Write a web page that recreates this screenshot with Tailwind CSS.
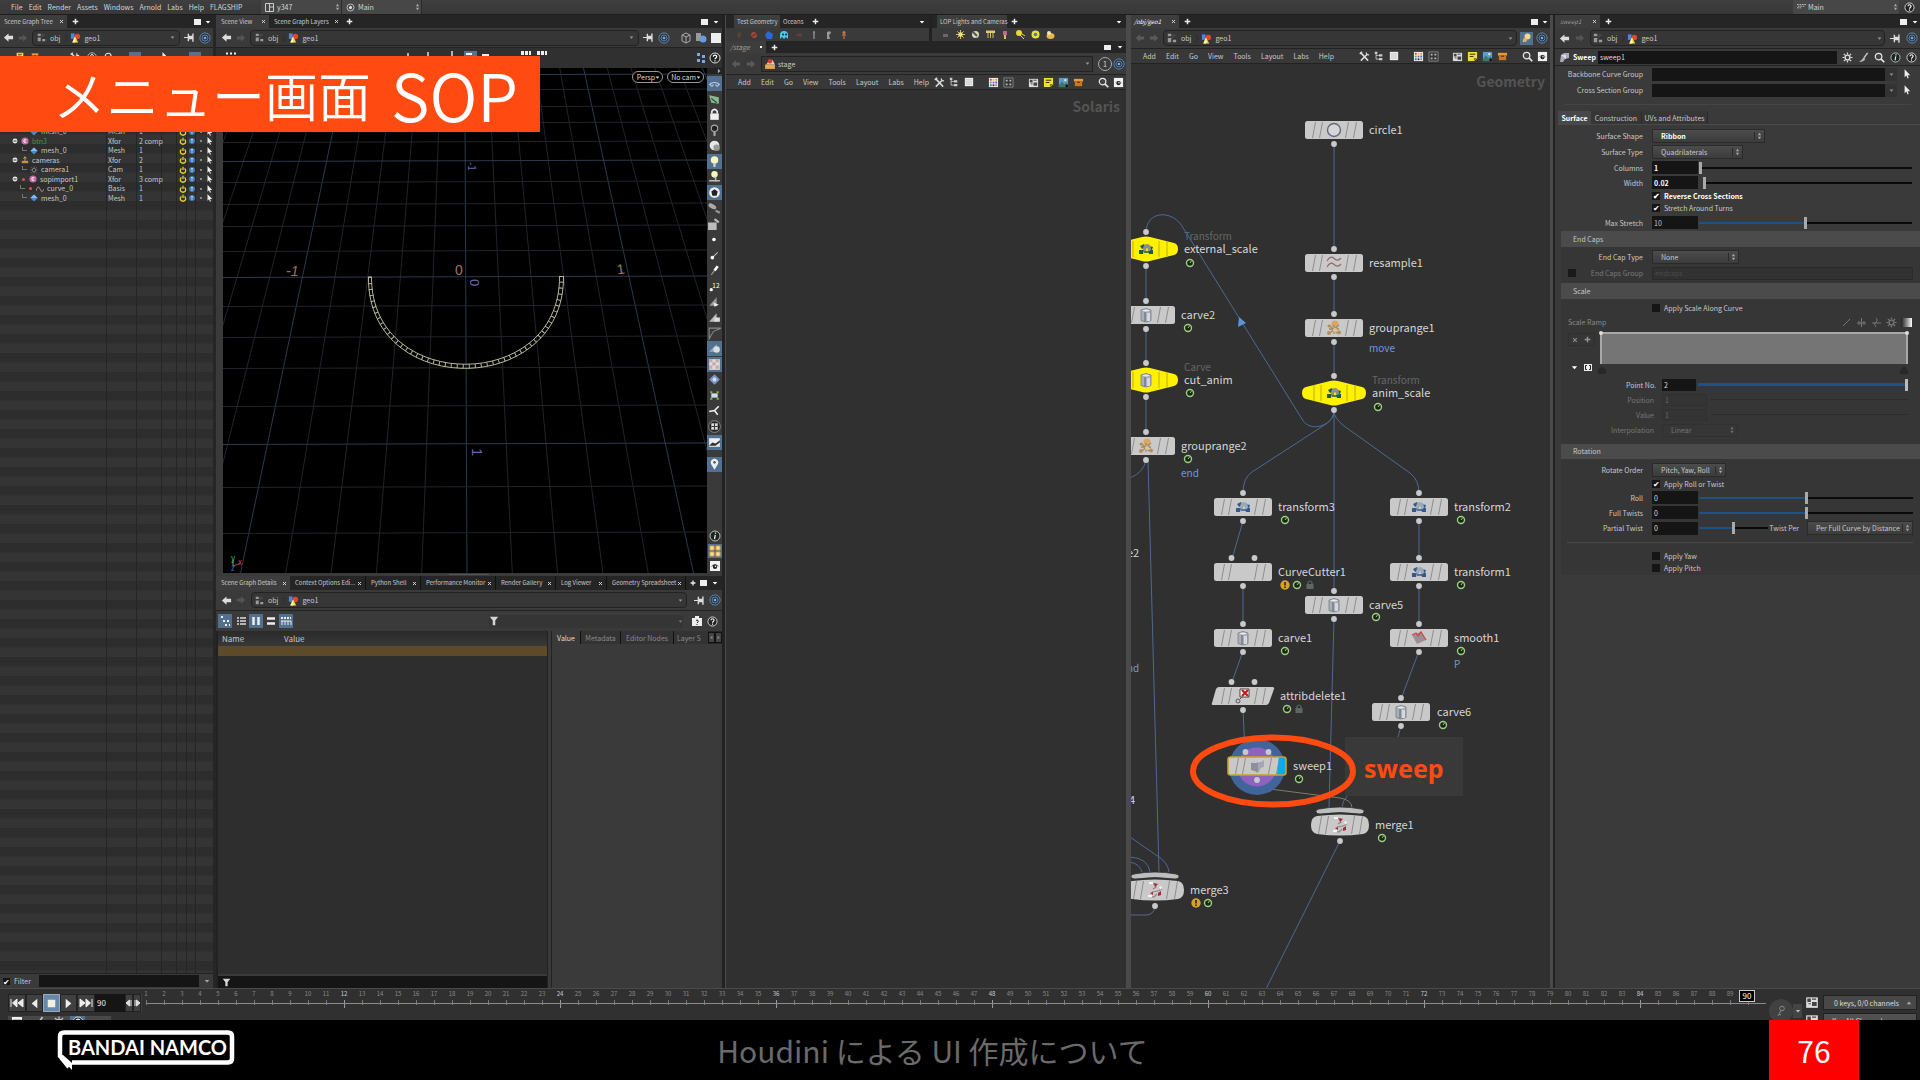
<!DOCTYPE html>
<html lang="ja">
<head>
<meta charset="utf-8">
<title>メニュー画面 SOP</title>
<script src="https://cdn.jsdelivr.net/npm/@tailwindcss/browser@4"></script>
</head>
<body class="min-h-screen flex flex-col bg-black text-[#c8c8c8] font-['Noto_Sans_CJK_JP','Noto_Sans',sans-serif] text-[7px] leading-[10px] whitespace-nowrap overflow-hidden">

<svg class="hidden">
  <symbol id="back" viewBox="0 0 12 12"><path d="M1 6 6 1.500v2.700h5v3.600H6v2.700z" fill="currentColor"/></symbol>
  <symbol id="fwd" viewBox="0 0 12 12"><path d="M11 6 6 1.500v2.700H1v3.600h5v2.700z" fill="currentColor"/></symbol>
  <symbol id="obj" viewBox="0 0 12 12"><path d="M1 1h4v3H1zM1 6h4v5H1zM7 8h4v3H7z" fill="#9a9a9a"/><path d="M5 2.500h5M5 7l4-4" stroke="#777" stroke-dasharray="1 1" fill="none"/></symbol>
  <symbol id="geo" viewBox="0 0 12 12"><path d="M1 1.500h4v6H1z" fill="#4d86d8"/><circle cx="8" cy="5" r="3" fill="#e0482c"/><path d="M5.500 5 9 11.500H2.500z" fill="#f4d93c"/><path d="M5.500 5 6 11.500H2.500z" fill="#fff3b0"/></symbol>
  <symbol id="pin" viewBox="0 0 12 12"><path d="M0 5.500h4v1H0zM4 2h1.500v2H9V1.500h1.500v9H9V8H5.500v2H4z" fill="#ddd"/></symbol>
  <symbol id="target" viewBox="0 0 14 14"><circle cx="7" cy="7" r="6" fill="#23384f" stroke="#6f8aa6"/><circle cx="7" cy="7" r="3.500" fill="none" stroke="#6a88a8"/><circle cx="7" cy="7" r="1.500" fill="#88a8c8"/></symbol>
  <symbol id="help" viewBox="0 0 12 12"><circle cx="6" cy="6" r="5" fill="#222" stroke="#ddd"/><path d="M4.300 4.700c0-2.200 3.400-2.200 3.400 0 0 1.300-1.700 1.200-1.700 2.600M6 8.300v1.200" stroke="#fff" stroke-width="1.200" fill="none"/></symbol>
  <symbol id="info" viewBox="0 0 12 12"><circle cx="6" cy="6" r="5" fill="#1c2420" stroke="#b9c4bd"/><path d="M6.500 2.500v1.200M6.300 4.800 5.500 9.200" stroke="#e8eee9" stroke-width="1.300"/></symbol>
  <symbol id="mag" viewBox="0 0 12 12"><circle cx="5" cy="5" r="3.600" fill="#444" stroke="#e8e8e8" stroke-width="1.300"/><path d="m7.800 7.800 3.400 3.400" stroke="#e8e8e8" stroke-width="1.800"/></symbol>
  <symbol id="eye" viewBox="0 0 12 12"><path d="M1 1h10v10H1z" fill="#f2f2f2"/><path d="M1.500 7Q6 1.500 10.500 7 6 3.500 1.500 7z" fill="#222"/><circle cx="6" cy="6.800" r="2.200" fill="#222"/><circle cx="6.500" cy="6.300" r=".8" fill="#fff"/></symbol>
  <symbol id="gear" viewBox="0 0 12 12"><circle cx="6" cy="6" r="2.600" fill="none" stroke="currentColor" stroke-width="1.500"/><path d="M6 .5v2.300M6 9.200v2.300M.5 6h2.300M9.200 6h2.300M2 2l1.700 1.700M8.300 8.300 10 10M10 2 8.300 3.700M3.700 8.300 2 10" stroke="currentColor" stroke-width="1.300"/></symbol>
  <symbol id="brush" viewBox="0 0 12 12"><path d="M10.500 1 6.500 6.500" stroke="#ccc" stroke-width="1.500"/><path d="M6 6 8 7.500Q6 11 1 10.500 4.500 9 6 6z" fill="#bbb"/></symbol>
  <symbol id="tools" viewBox="0 0 12 12"><path d="m2 10.500 7-7M1.500 1.500l8.500 9" stroke="#ddd" stroke-width="1.600"/><path d="M8 1.500Q8 4.500 11 4.200M.8 3.300 3.500.8" stroke="#ddd" stroke-width="1.400" fill="none"/></symbol>
  <symbol id="tree" viewBox="0 0 12 12"><path d="M1 1h3v2.500H1zM6 4h4v2.500H6zM6 8.500h4V11H6z" fill="#ccc"/><path d="M2.500 3.500v6.300H6M2.500 5.300H6" stroke="#ccc" fill="none"/></symbol>
  <symbol id="list" viewBox="0 0 12 12"><path d="M1 1h10v10H1z" fill="#eee"/><path d="M2 3.500h8M2 6h8M2 8.500h8" stroke="#bbb"/></symbol>
  <symbol id="pal" viewBox="0 0 12 12"><path d="M1 1h10v10H1z" fill="#f4f4f4"/><path d="M2 2h2v2H2z" fill="#d33"/><path d="M5 2h2v2H5z" fill="#e8c030"/><path d="M8 2h2v2H8z" fill="#e89030"/><path d="M2 5h2v2H2z" fill="#38b048"/><path d="M5 5h2v2H5z" fill="#b040c0"/><path d="M8 5h2v2H8zM2 8h2v2H2z" fill="#3070d0"/><path d="M5 8h2v2H5z" fill="#333"/><path d="M8 8h2v2H8z" fill="#888"/></symbol>
  <symbol id="dots" viewBox="0 0 12 12"><path d="M1 1h10v10H1z" fill="#333" stroke="#888"/><path d="M3 3h2v2H3zM7 3h2v2H7zM3 7h2v2H3zM7 7h2v2H7z" fill="#bbb"/></symbol>
  <symbol id="nodes" viewBox="0 0 12 12"><path d="M1 2h10v9H1z" fill="#ddd"/><path d="M2 3h3v3H2zM6 6h4v3.500H6z" fill="#444"/><path d="M6 3.500h3.500M3 7.500h2" stroke="#444"/></symbol>
  <symbol id="note" viewBox="0 0 12 12"><path d="M1 1h10v7l-3 3H1z" fill="#f2e02c"/><path d="M3 3.500h6M3 6h4" stroke="#222"/><path d="M11 7.500 7.500 11V7.500z" fill="#8a7c10"/></symbol>
  <symbol id="img" viewBox="0 0 12 12"><path d="M1 1h10v10H1z" fill="#5b9bd0"/><path d="m1 9 3-4 3 3 2-2 2 2v3H1z" fill="#3b7a6a"/><circle cx="8" cy="3.500" r="1.200" fill="#f2f0b0"/><circle cx="9.500" cy="9.800" r="1.500" fill="#111"/></symbol>
  <symbol id="box" viewBox="0 0 12 12"><path d="M1 2h10v3H1z" fill="#e89a3c"/><path d="M2 5h8v5H2z" fill="#c87a22"/><path d="M4.500 5h3v1.500h-3z" fill="#6b3d08"/></symbol>
  <symbol id="group" viewBox="0 0 10 10"><path d="M1 6h8v3H1z" fill="#c89048"/><path d="M5 1v5M3 3l2-2 2 2" stroke="#d0b060" stroke-width="1.200" fill="none"/></symbol>
  <symbol id="cur" viewBox="0 0 10 12"><path d="M2 0v10l2.200-2 1.500 3.500 1.500-.7L5.700 7.500H9z" fill="#eee"/></symbol>
  <symbol id="pow" viewBox="0 0 10 10"><path d="M3 3Q1 5 2 7.500q3 3 6 0Q9 5 7 3M5 1v4" stroke="#e8d22c" stroke-width="1.600" fill="none"/></symbol>
  <symbol id="up" viewBox="0 0 10 10"><circle cx="5" cy="5" r="3.800" fill="#3d78bd"/><path d="M5 2.500v5M3.500 4 5 2.500 6.500 4" stroke="#cde" fill="none"/></symbol>
  <symbol id="updn" viewBox="0 0 6 10"><path d="M3 1 5 4H1zM3 9 1 6h4z" fill="#aaa"/></symbol>
  <symbol id="dn" viewBox="0 0 8 8"><path d="M1 2.500h6L4 6z" fill="currentColor"/></symbol>
  <symbol id="funnel" viewBox="0 0 12 12"><path d="M1 1h10L7.500 5.500V11h-3V5.500z" fill="#d4d4d4"/></symbol>
  <symbol id="mesh" viewBox="0 0 10 10"><path d="m5 .5 4.500 4.500L5 9.500.5 5z" fill="#4a8ac8"/><path d="m5 .5 4.500 4.500H.5z" fill="#85bbec"/></symbol>
  <symbol id="xf" viewBox="0 0 10 10"><circle cx="5" cy="5" r="4.500" fill="#c86aa8"/><path d="M6.500 3.500Q3.500 2.500 3.500 5t3 1.500" stroke="#fff" stroke-width="1.200" fill="none"/></symbol>
  <symbol id="minus" viewBox="0 0 8 8"><circle cx="4" cy="4" r="3.300" fill="#e8e8e8"/><path d="M2 4h4" stroke="#222" stroke-width="1.200"/></symbol>
  <symbol id="plus" viewBox="0 0 8 8"><path d="M4 .8v6.400M.8 4h6.400" stroke="#eee" stroke-width="1.700"/></symbol>
  <symbol id="x" viewBox="0 0 6 6"><path d="m1.200 1.200 3.600 3.600m0-3.600L1.200 4.800" stroke="#ddd" stroke-width="1.100"/></symbol>
</svg>

<div class="relative flex-1 flex flex-col bg-[#3a3a3a]">
  <!-- main menu -->
  <header class="h-[15px] flex items-center bg-linear-to-b from-[#3f3f3f] to-[#383838] border-b border-[#1d1d1d] text-[#d4d4d4]">
    <nav class="flex items-center gap-[6px] pl-[11px] w-[261px]">
      <a href="#">File</a><a href="#">Edit</a><a href="#">Render</a><a href="#">Assets</a><a href="#">Windows</a><a href="#">Arnold</a><a href="#">Labs</a><a href="#">Help</a><a href="#">FLAGSHIP</a>
    </nav>
    <button class="h-[14px] w-[81px] pl-1 flex items-center gap-[3px] bg-[#474747] border-r border-[#2a2a2a]">
      <svg class="size-[9px]" viewBox="0 0 9 9"><path d="M.5.5h8v8h-8zM4.500.5v8M4.500 4h4" fill="none" stroke="#ccc"/></svg>y347
      <svg class="w-[5px] h-2 ml-auto mr-px"><use href="#updn"/></svg></button>
    <button class="h-[14px] w-[80px] pl-1 flex items-center gap-[3px] bg-[#474747] border-r border-[#2a2a2a]">
      <svg class="size-[9px]" viewBox="0 0 9 9"><circle cx="4.500" cy="4.500" r="3.500" fill="none" stroke="#bbb"/><circle cx="4.500" cy="4.500" r="1.500" fill="#eee"/></svg>Main
      <svg class="w-[5px] h-2 ml-auto mr-px"><use href="#updn"/></svg></button>
    <button class="ml-auto h-[14px] w-[106px] pl-1 flex items-center gap-px bg-[#474747]">
      <svg class="w-[10px] h-2" viewBox="0 0 12 8"><path d="M0 1h12M1 3h9M0 5h5" stroke="#ccc" stroke-dasharray="2 1"/></svg>Main
      <svg class="w-[5px] h-2 ml-auto mr-px"><use href="#updn"/></svg></button>
    <svg class="size-[11px] mx-[5px]"><use href="#help"/></svg>
  </header>

  <main class="flex-1 grid grid-cols-[216fr_509fr_404fr_424fr_367fr] min-h-0">

    <!-- scene graph tree -->
    <section class="min-w-0 flex flex-col border-r-3 border-[#262626]">
      <div class="h-[13px] flex items-center bg-[#252525] text-[6px]">
        <div class="h-full w-[67px] pl-1 flex items-center justify-between pr-[3px] bg-[#3d3d3d]">Scene Graph Tree<svg class="size-[5px]"><use href="#x"/></svg></div>
        <svg class="size-[7px] ml-[5px]"><use href="#plus"/></svg>
        <i class="w-[7px] h-[6px] bg-[#eee] ml-auto mr-[4px]"></i><svg class="size-[6px] mr-[2px] text-white"><use href="#dn"/></svg>
      </div>
      <div class="h-5 flex items-center gap-1 pl-[3px] pr-[2px] border-b border-[#222]">
        <svg class="size-[11px] text-[#ddd]"><use href="#back"/></svg><svg class="size-[10px] text-[#555]"><use href="#fwd"/></svg>
        <div class="flex-1 h-4 flex items-center gap-1 px-1 bg-[#363636] border border-[#222] rounded-sm">
          <svg class="size-[9px]"><use href="#obj"/></svg>obj<span class="text-[#222]">〉</span><svg class="size-[11px] -ml-[6px]"><use href="#geo"/></svg>geo1<svg class="size-[5px] ml-auto text-[#999]"><use href="#dn"/></svg></div>
        <svg class="size-[11px]"><use href="#pin"/></svg><svg class="size-3"><use href="#target"/></svg>
      </div>
      <div class="h-5 flex items-start gap-[7px] pt-1 pl-4">
        <svg class="size-2"><use href="#note"/></svg><svg class="size-2"><use href="#box"/></svg>
        <svg class="size-[10px] ml-6"><use href="#tools"/></svg><svg class="size-[10px]"><use href="#help"/></svg><svg class="size-[10px]"><use href="#mag"/></svg>
        <span class="size-3 bg-[#5a7090] ml-2"></span><svg class="size-[10px] ml-3"><use href="#cur"/></svg><span class="size-3 bg-[#5a7090] ml-auto mr-3"></span>
      </div>
      <div class="flex-1 relative bg-[repeating-linear-gradient(180deg,#2d2d2d_0px_9px,#343434_10px_19px)]">
        <div class="absolute inset-y-0 left-[106px] w-[31px] border-x border-[#252525]"></div>
        <div class="absolute inset-y-0 left-[161px] w-4 border-x border-[#252525]"></div>
        <div class="absolute inset-y-0 left-[186px] w-[10px] border-x border-[#252525]"></div>
        <table class="relative mt-[59px] w-full h-[76px] table-fixed leading-[9px] border-collapse">
          <colgroup><col class="w-[108px]"><col class="w-[31px]"><col class="w-[40px]"><col></colgroup>
          <tbody id="tree-rows"></tbody>
        </table>
      </div>
      <label class="h-[15px] flex items-center gap-1 pl-[3px] pr-[2px] bg-[#3a3a3a] border-t border-[#222]">
        <input type="checkbox" checked class="appearance-none size-[7px] bg-[#151515] flex items-center justify-center checked:before:content-['✔'] before:text-white before:text-[8px] before:leading-[7px]">Filter
        <input type="text" aria-label="Filter" class="ml-1 flex-1 min-w-0 h-3 bg-[#151515]"><svg class="size-[6px] mx-px text-[#aaa]"><use href="#dn"/></svg>
      </label>
    </section>

    <!-- scene view -->
    <section class="min-w-0 flex flex-col border-r-3 border-[#222]">
      <div class="h-[13px] flex items-center bg-[#252525] text-[6px]">
        <div class="h-full w-[53px] pl-[5px] flex items-center justify-between pr-[3px] bg-[#3d3d3d]">Scene View<svg class="size-[5px]"><use href="#x"/></svg></div>
        <div class="h-full w-[73px] pl-[5px] flex items-center justify-between pr-[3px]">Scene Graph Layers<svg class="size-[5px]"><use href="#x"/></svg></div>
        <svg class="size-[7px] ml-1"><use href="#plus"/></svg>
        <i class="w-[7px] h-[6px] bg-[#eee] ml-auto mr-[5px]"></i><svg class="size-[6px] mr-[3px] text-white"><use href="#dn"/></svg>
      </div>
      <div class="h-5 flex items-center gap-1 pl-[5px] pr-px border-b border-[#222]">
        <svg class="size-[11px] text-[#ddd]"><use href="#back"/></svg><svg class="size-[10px] text-[#555]"><use href="#fwd"/></svg>
        <div class="flex-1 h-4 flex items-center gap-1 px-1 bg-[#363636] border border-[#222] rounded-sm">
          <svg class="size-[9px]"><use href="#obj"/></svg>obj<span class="text-[#222]">〉</span><svg class="size-[11px] -ml-[6px]"><use href="#geo"/></svg>geo1<svg class="size-[5px] ml-auto text-[#999]"><use href="#dn"/></svg></div>
        <svg class="size-[11px]"><use href="#pin"/></svg><svg class="size-3"><use href="#target"/></svg>
        <svg class="size-3 ml-[6px]" viewBox="0 0 12 12"><path d="M2 3 6 1l4 2v6l-4 2-4-2zM2 3l4 2 4-2M6 5v6" fill="none" stroke="#aaa"/></svg>
        <svg class="size-3 -ml-px" viewBox="0 0 12 12"><path d="M1 1h5v8H1z" fill="#999"/><circle cx="8" cy="7" r="3.500" fill="#6a9ad8"/></svg>
        <i class="size-[10px] bg-[#eee]"></i>
      </div>
      <div class="h-5 flex items-center pl-[10px] pr-px bg-[#303030]">
        <svg class="w-3 h-2 self-start mt-1" viewBox="0 0 12 8"><path d="M0 1.500h12" stroke="#eee" stroke-width="2" stroke-dasharray="2 2"/></svg>
        <svg class="h-[10px] w-[150px] ml-[168px] self-start mt-px" viewBox="0 0 150 10"><path d="M2 4v5M22 3v5M46 2v6" stroke="#ddd" stroke-width="1.500"/><path d="M58 2h13v8H58z" fill="#5a7090"/><path d="M60 5h6M76 6h7" stroke="#eee" stroke-width="2"/><path d="M115 4h10M131 4h10" stroke="#eee" stroke-width="4" stroke-dasharray="3 1"/></svg>
        <svg class="w-[10px] h-3 ml-auto" viewBox="0 0 10 12"><path d="M1 1h3v3H1zM1 7h3v3H1zM6 3h3v3H6zM6 8h3v3H6z" fill="#7aa8e0"/></svg>
        <svg class="size-3 ml-[3px]"><use href="#help"/></svg>
      </div>
      <div class="h-[505px] flex pl-[7px] bg-[#3a3a3a]">
        <div class="relative flex-1 min-w-0 bg-black">
          <svg id="viewport" class="absolute inset-0 size-full"></svg>
          <div class="absolute right-[3px] top-[3px] flex gap-1">
            <button class="h-3 pl-1 pr-[2px] rounded-full border border-[#999] bg-black text-[#ddd] flex items-center">Persp<svg class="size-[5px]"><use href="#dn"/></svg></button>
            <button class="h-3 pl-[3px] pr-[2px] rounded-full border border-[#999] bg-black text-[#ddd] flex items-center">No cam<svg class="size-[5px]"><use href="#dn"/></svg></button>
          </div>
        </div>
        <div class="w-[15px] flex flex-col items-center">
          <i class="w-full h-[6px] mb-[2px] bg-[#222] flex justify-end"><svg class="size-[6px] text-[#aaa] -rotate-90"><use href="#dn"/></svg></i>
          <div id="display-bar" class="h-[374px] w-full flex flex-col justify-between items-center"></div>
          <div class="size-[15px] bg-[#52708f] mt-[7px]"><svg viewBox="0 0 14 14"><path d="M7 12 4 7a3.500 3.500 0 1 1 6 0z" fill="#eee"/><circle cx="7" cy="5" r="1.200" fill="#555"/></svg></div>
          <div class="mt-auto flex flex-col items-center gap-[2px] pb-px">
            <svg class="size-3"><use href="#info"/></svg>
            <svg class="size-[14px] bg-[#52708f]" viewBox="0 0 14 14"><path d="M2 2h4v4H2zM8 2h4v4H8zM2 8h4v4H2zM8 8h4v4H8z" fill="#f6e2a8" stroke="#e8a030"/></svg>
            <svg class="size-3"><use href="#eye"/></svg>
          </div>
        </div>
      </div>
      <div class="h-[3px] flex justify-center items-center"><i class="w-10 h-px bg-[#555]"></i></div>
      <div class="h-[14px] flex items-center bg-[#252525] text-[6px]">
        <div class="h-full w-[74px] pl-[5px] pr-[3px] flex items-center justify-between bg-[#3d3d3d]">Scene Graph Details<svg class="size-[5px]"><use href="#x"/></svg></div>
        <div class="h-full w-[76px] pl-[5px] pr-[3px] flex items-center justify-between border-r border-[#111]">Context Options Edi...<svg class="size-[5px]"><use href="#x"/></svg></div>
        <div class="h-full w-[55px] pl-[5px] pr-[3px] flex items-center justify-between border-r border-[#111]">Python Shell<svg class="size-[5px]"><use href="#x"/></svg></div>
        <div class="h-full w-[75px] pl-[5px] pr-[3px] flex items-center justify-between border-r border-[#111]">Performance Monitor<svg class="size-[5px]"><use href="#x"/></svg></div>
        <div class="h-full w-[60px] pl-[5px] pr-[3px] flex items-center justify-between border-r border-[#111]">Render Gallery<svg class="size-[5px]"><use href="#x"/></svg></div>
        <div class="h-full w-[51px] pl-[5px] pr-[3px] flex items-center justify-between border-r border-[#111]">Log Viewer<svg class="size-[5px]"><use href="#x"/></svg></div>
        <div class="h-full w-[79px] pl-[5px] pr-[3px] flex items-center justify-between border-r border-[#111]">Geometry Spreadsheet<svg class="size-[5px]"><use href="#x"/></svg></div>
        <svg class="size-[6px] ml-1"><use href="#plus"/></svg><i class="w-[7px] h-[6px] bg-[#eee] ml-1"></i><svg class="size-[6px] ml-auto mr-1 text-white"><use href="#dn"/></svg>
      </div>
      <div class="h-[21px] flex items-center gap-1 pl-[5px] pr-px border-b border-[#222]">
        <svg class="size-[11px] text-[#ddd]"><use href="#back"/></svg><svg class="size-[10px] text-[#555]"><use href="#fwd"/></svg>
        <div class="flex-1 h-4 ml-px flex items-center gap-1 px-[3px] bg-[#363636] border border-[#222] rounded-sm">
          <svg class="size-[9px]"><use href="#obj"/></svg>obj<span class="text-[#222]">〉</span><svg class="size-[11px] -ml-[6px]"><use href="#geo"/></svg>geo1<svg class="size-[5px] ml-auto text-[#999]"><use href="#dn"/></svg></div>
        <svg class="size-[11px] ml-[3px]"><use href="#pin"/></svg><svg class="size-3"><use href="#target"/></svg>
      </div>
      <div class="h-5 flex items-center gap-px pl-[2px] pr-1">
        <button aria-label="Tree" class="size-[14px] mr-px bg-[#52708f]"><svg viewBox="0 0 14 14"><path d="M3 2h2v2H3zM5 6h2v2H5zM9 6h2v2H9zM7 10h2v2H7zM11 10h1v2h-1z" fill="#eee"/></svg></button>
        <button aria-label="List" class="size-[14px]"><svg viewBox="0 0 14 14"><path d="M3 4h2M6 4h6M3 7h2M6 7h6M3 10h2M6 10h6" stroke="#ddd" stroke-width="1.500"/></svg></button>
        <button aria-label="Columns" class="size-[14px] bg-[#52708f]"><svg viewBox="0 0 14 14"><path d="M4.500 3v8M9.500 3v8" stroke="#eee" stroke-width="2.500"/></svg></button>
        <button aria-label="Rows" class="size-[14px]"><svg viewBox="0 0 14 14"><path d="M3 4.500h8M3 9.500h8" stroke="#eee" stroke-width="2.500"/></svg></button>
        <button aria-label="Samples" class="size-[14px] bg-[#52708f]"><svg viewBox="0 0 14 14"><path d="M2 4h10" stroke="#eee" stroke-width="2" stroke-dasharray="2 1"/><path d="M2 7h10M3 7v4M6 7v4M9 7v4M12 7v4" stroke="#eee"/></svg></button>
        <div class="ml-[195px] flex-1 h-[13px] bg-[#353535] flex items-center"><svg class="size-[10px]"><use href="#funnel"/></svg><svg class="size-[5px] ml-auto text-[#777]"><use href="#dn"/></svg></div>
        <svg class="size-[10px] ml-2" viewBox="0 0 10 10"><path d="M0 2h3V0h4v2h3v8H0z" fill="#eee"/><path d="M4 4.500q1-1 2 0T5 7M5 8v1" stroke="#222" fill="none"/></svg>
        <svg class="size-[11px] ml-1"><use href="#help"/></svg>
      </div>
      <div class="flex-1 flex">
        <div class="w-[332px] flex flex-col bg-[#2e2e2e] border-l-2 border-r-1 border-[#222]">
          <table class="w-full text-left">
            <thead><tr class="h-[15px] bg-linear-to-b from-[#2a2a2a] to-[#383838]"><th class="w-[66px] pl-1 font-normal text-[8px]">Name</th><th class="font-normal text-[8px]">Value</th></tr></thead>
            <tbody><tr class="h-[10px] bg-[#5d4a28]"><td></td><td></td></tr></tbody>
          </table>
          <label class="mt-auto h-[14px] flex items-center gap-1 pl-1 bg-[#151515] border-t-2 border-[#3a3a3a]"><svg class="size-[9px]"><use href="#funnel"/></svg><input type="text" aria-label="Filter names" class="flex-1 bg-transparent h-2"></label>
        </div>
        <div class="flex-1 min-w-0 ml-[3px] border-l border-[#222]">
          <div class="h-[13px] flex items-center bg-[#262626] text-[#8a8a8a]">
            <button class="h-full w-[28px] bg-[#3a3a3a] text-[#ddd]">Value</button><button class="h-full w-[40px] border-l border-[#111] bg-[#333]">Metadata</button><button class="h-full w-[53px] border-l border-[#111] bg-[#333]">Editor Nodes</button><button class="h-full pl-[3px] border-l border-[#111] bg-[#333] flex-1 text-left">Layer S</button><button aria-label="Previous" class="h-[11px] w-[7px] bg-[#444] border border-[#111]"><svg class="size-[5px] rotate-90"><use href="#dn"/></svg></button><button aria-label="Next" class="h-[11px] w-[7px] bg-[#444] border border-[#111]"><svg class="size-[5px] -rotate-90"><use href="#dn"/></svg></button>
          </div>
        </div>
      </div>
    </section>

    <!-- solaris network -->
    <section class="min-w-0 flex flex-col border-l border-r-3 border-[#4a4a4a]">
      <div class="h-[26px] flex">
        <div class="w-[206px] flex flex-col border-r-3 border-[#222]">
          <div class="h-[13px] flex items-center bg-[#252525] pl-2 text-[6px]">
            <div class="h-full w-[46px] px-[3px] flex items-center bg-[#3d3d3d]">Test Geometry</div><div class="h-full w-[28px] px-[3px] flex items-center">Oceans</div><svg class="size-[7px] ml-[4px]"><use href="#plus"/></svg><svg class="size-[6px] ml-auto mr-1 text-white"><use href="#dn"/></svg></div>
          <div class="flex-1 flex items-center gap-[7px] pl-[9px]">
            <svg class="size-2" viewBox="0 0 8 8"><path d="M2 2 6 1v5L3 7z" fill="#55452c"/></svg>
            <svg class="size-2" viewBox="0 0 8 8"><circle cx="4" cy="4" r="3" fill="#a04a3a"/><path d="M1 6l6-4" stroke="#622"/></svg>
            <svg class="size-2" viewBox="0 0 8 8"><path d="M0 4 3 0l5 3-1 5H2z" fill="#2868d8"/></svg>
            <svg class="size-2" viewBox="0 0 8 8"><path d="M0 8V4a4 4 0 0 1 8 0v4L6 6 4 8 2 6z" fill="#50c8e8"/><circle cx="3" cy="3.500" r="1" fill="#123"/><circle cx="6" cy="3.500" r="1" fill="#123"/></svg>
            <svg class="size-2" viewBox="0 0 8 8"><path d="M1 4h6M5 2v4" stroke="#7a3a38" stroke-width="1.500"/></svg>
            <svg class="size-2" viewBox="0 0 8 8"><path d="M4 0v8M3 2h2" stroke="#888" stroke-width="1.500"/></svg>
            <svg class="size-2" viewBox="0 0 8 8"><path d="M2 1q4-2 4 1L4 4l1 4H2z" fill="#999"/></svg>
            <svg class="size-2" viewBox="0 0 8 8"><circle cx="4" cy="1.500" r="1.500" fill="#c87850"/><path d="M4 3v5M2 4h4" stroke="#a86848" stroke-width="1.500"/></svg>
          </div>
        </div>
        <div class="flex-1 flex flex-col">
          <div class="h-[13px] flex items-center bg-[#252525] pl-[5px] text-[6px]">
            <div class="h-full w-[70px] px-[3px] flex items-center bg-[#3d3d3d]">LOP Lights and Cameras</div><svg class="size-[7px] ml-[4px]"><use href="#plus"/></svg><svg class="size-[6px] ml-auto mr-1 text-white"><use href="#dn"/></svg></div>
          <div class="flex-1 flex items-center gap-[6px] pl-[9px]">
            <svg class="size-[9px]" viewBox="0 0 9 9"><path d="M2 4h5v3H2z" fill="#667"/></svg>
            <svg class="size-[9px]" viewBox="0 0 9 9"><circle cx="4.500" cy="4.500" r="2.200" fill="#f2e8a0"/><path d="M4.500 0v9M0 4.500h9M1.300 1.300l6.400 6.400M7.700 1.300 1.300 7.700" stroke="#f2e070" stroke-width=".8"/></svg>
            <svg class="size-[9px]" viewBox="0 0 9 9"><circle cx="4.500" cy="4.500" r="3.500" fill="#d8d8b8"/><path d="M2 2l4 4" stroke="#555" stroke-width="2"/></svg>
            <svg class="size-[9px]" viewBox="0 0 9 9"><path d="M0 1h9v1.500H0zM2 3v5M4.500 3v5M7 3v5" fill="#e8b840" stroke="#f0e080" stroke-width=".8"/></svg>
            <svg class="size-[9px]" viewBox="0 0 9 9"><path d="M2 1h4v4H2z" fill="#b86a90"/><path d="M4 5v4" stroke="#e0c040" stroke-width="2"/></svg>
            <svg class="size-[9px]" viewBox="0 0 9 9"><circle cx="3" cy="3" r="3" fill="#ead838"/><path d="m4 5 4 4M6 4l3 2" stroke="#ead838"/></svg>
            <svg class="size-[9px]" viewBox="0 0 9 9"><circle cx="4.500" cy="4.500" r="4" fill="#ece040"/><circle cx="4.500" cy="4.500" r="1.800" fill="#4878b8"/></svg>
            <svg class="size-[9px]" viewBox="0 0 9 9"><ellipse cx="4.500" cy="6" rx="4" ry="3" fill="#e8b848"/><circle cx="3" cy="3" r="2" fill="#f0e8b0"/></svg>
          </div>
        </div>
      </div>
      <div class="h-3 flex items-center bg-[#252525]">
        <div class="h-3 w-[40px] pl-1 pr-1 flex items-center justify-between bg-[#3d3d3d] italic text-[#999]">/stage<i class="size-[2px] bg-white"></i></div>
        <svg class="size-[7px] ml-[5px]"><use href="#plus"/></svg><i class="w-[7px] h-[5px] bg-[#eee] ml-auto mr-[6px]"></i><svg class="size-[6px] mr-[3px] text-white"><use href="#dn"/></svg>
      </div>
      <div class="h-[21px] flex items-center gap-[5px] pl-[5px] pr-px">
        <svg class="size-[10px] text-[#5a5a5a]"><use href="#back"/></svg><svg class="size-[10px] text-[#5a5a5a]"><use href="#fwd"/></svg>
        <div class="flex-1 h-4 flex items-center gap-[2px] px-[2px] bg-[#363636] border border-[#222]"><svg class="size-[12px]" viewBox="0 0 11 11"><path d="M1 6h9v4H1z" fill="#e8a850"/><path d="M2 6 5 2h3l2 4z" fill="#f0d0a0"/><circle cx="5.500" cy="3" r="2" fill="#d83838"/></svg>stage<svg class="size-[5px] ml-auto text-[#999]"><use href="#dn"/></svg></div>
        <span class="size-[14px] rounded-full border border-[#aaa] flex items-center justify-center text-[8px] -mr-1">1</span><svg class="size-3"><use href="#target"/></svg>
      </div>
      <div class="h-4 flex items-center pl-3 pr-[2px] border-y border-[#222] bg-[#383838]">
        <nav class="flex gap-[10px]"><a href="#">Add</a><a href="#">Edit</a><a href="#">Go</a><a href="#">View</a><a href="#">Tools</a><a href="#">Layout</a><a href="#">Labs</a><a href="#">Help</a></nav>
        <svg class="size-[11px] ml-[5px]"><use href="#tools"/></svg><svg class="size-[10px] ml-1"><use href="#tree"/></svg><svg class="size-[10px] ml-[5px]"><use href="#list"/></svg>
        <svg class="size-[11px] ml-auto"><use href="#pal"/></svg><svg class="size-[11px] ml-1"><use href="#dots"/></svg>
        <svg class="size-[11px] ml-auto"><use href="#nodes"/></svg><svg class="size-[11px] ml-1"><use href="#note"/></svg><svg class="size-[11px] ml-1"><use href="#img"/></svg><svg class="size-[11px] ml-1"><use href="#box"/></svg>
        <svg class="size-[11px] ml-auto"><use href="#mag"/></svg><svg class="size-[11px] ml-1"><use href="#eye"/></svg>
      </div>
      <div class="flex-1 bg-[#303030] text-right pr-[6px] pt-[7px] text-[14px] leading-[18px] font-bold text-[#545454]">Solaris</div>
    </section>

    <!-- geometry network -->
    <section class="min-w-0 flex flex-col border-l-2 border-r-3 border-[#4a4a4a]">
      <div class="h-[13px] flex items-center bg-[#252525] text-[6px]">
        <div class="h-full w-[48px] pl-[3px] pr-[3px] flex items-center justify-between bg-[#3d3d3d] italic text-white">/obj/geo1<svg class="size-[5px]"><use href="#x"/></svg></div>
        <svg class="size-[7px] ml-[5px]"><use href="#plus"/></svg><i class="w-[7px] h-[6px] bg-[#eee] ml-auto mr-1"></i><svg class="size-[6px] mr-[2px] text-white"><use href="#dn"/></svg>
      </div>
      <div class="h-5 flex items-center gap-1 pl-1 pr-[2px]">
        <svg class="size-[10px] text-[#5a5a5a]"><use href="#back"/></svg><svg class="size-[10px] text-[#5a5a5a]"><use href="#fwd"/></svg>
        <div class="flex-1 h-4 flex items-center gap-1 px-[3px] bg-[#363636] border border-[#222] rounded-sm">
          <svg class="size-[10px]"><use href="#obj"/></svg>obj<span class="text-[#222]">〉</span><svg class="size-[11px] -ml-[6px]"><use href="#geo"/></svg>geo1<svg class="size-[5px] ml-auto text-[#999]"><use href="#dn"/></svg></div>
        <svg class="size-[13px] -mx-px bg-[#52708f]" viewBox="0 0 13 13"><path d="M3 10 7 5" stroke="#ddd"/><circle cx="7.500" cy="4.500" r="3" fill="#f0d890"/><circle cx="5" cy="8" r="2" fill="#e8b060"/></svg><svg class="size-3"><use href="#target"/></svg>
      </div>
      <div class="h-4 flex items-center pl-3 pr-[2px] border-y border-[#222] bg-[#383838]">
        <nav class="flex gap-[10px]"><a href="#">Add</a><a href="#">Edit</a><a href="#">Go</a><a href="#">View</a><a href="#">Tools</a><a href="#">Layout</a><a href="#">Labs</a><a href="#">Help</a></nav>
        <svg class="size-[11px] ml-[25px]"><use href="#tools"/></svg><svg class="size-[10px] ml-1"><use href="#tree"/></svg><svg class="size-[10px] ml-[5px]"><use href="#list"/></svg>
        <svg class="size-[11px] ml-auto"><use href="#pal"/></svg><svg class="size-[11px] ml-1"><use href="#dots"/></svg>
        <svg class="size-[11px] ml-auto"><use href="#nodes"/></svg><svg class="size-[11px] ml-1"><use href="#note"/></svg><svg class="size-[11px] ml-1"><use href="#img"/></svg><svg class="size-[11px] ml-1"><use href="#box"/></svg>
        <svg class="size-[11px] ml-auto"><use href="#mag"/></svg><svg class="size-[11px] ml-1"><use href="#eye"/></svg>
      </div>
      <div class="flex-1 relative bg-[#303030] text-right pr-[5px] pt-[8px] text-[14px] leading-[18px] font-bold text-[#545454]">Geometry
        <svg id="network" class="absolute inset-0 size-full font-normal"></svg>
      </div>
    </section>

    <!-- parameters -->
    <section class="min-w-0 flex flex-col border-l-2 border-[#222]">
      <div class="h-[13px] flex items-center bg-[#252525] text-[6px]">
        <div class="h-full w-[45px] pl-[5px] pr-[3px] flex items-center justify-between bg-[#3d3d3d] italic text-[#999]">sweep1<svg class="size-[5px]"><use href="#x"/></svg></div>
        <svg class="size-[7px] ml-[5px]"><use href="#plus"/></svg><i class="w-[7px] h-[6px] bg-[#eee] ml-auto mr-[5px]"></i><svg class="size-[6px] mr-[2px] text-white"><use href="#dn"/></svg>
      </div>
      <div class="h-[21px] flex items-center gap-[5px] pl-1 pr-[2px] border-b border-[#222]">
        <svg class="size-[11px] text-[#ddd]"><use href="#back"/></svg><svg class="size-[10px] text-[#555]"><use href="#fwd"/></svg>
        <div class="flex-1 h-4 flex items-center gap-1 px-[2px] bg-[#363636] border border-[#222] rounded-sm">
          <svg class="size-[10px]"><use href="#obj"/></svg>obj<span class="text-[#222]">〉</span><svg class="size-[11px] -ml-[6px]"><use href="#geo"/></svg>geo1<svg class="size-[5px] ml-auto text-[#999]"><use href="#dn"/></svg></div>
        <svg class="size-[11px]"><use href="#pin"/></svg><svg class="size-3"><use href="#target"/></svg>
      </div>
      <div class="h-[17px] flex items-center gap-[5px] pl-1 pr-[3px] border-b border-[#222]">
        <svg class="size-[11px]" viewBox="0 0 11 11"><path d="M2 3 5 1h5v5L6 7 4 10H1z" fill="#aab"/><path d="M2 3h5v4" fill="#dde"/></svg>
        <label for="op" class="-ml-[2px] font-bold text-white">Sweep</label>
        <input id="op" type="text" value="sweep1" class="-ml-[3px] flex-1 min-w-0 h-[13px] pl-[2px] bg-[#151515] text-[#ddd]">
        <svg class="size-[11px] text-[#ddd]"><use href="#gear"/></svg><svg class="size-[11px]"><use href="#brush"/></svg><svg class="size-[11px]"><use href="#mag"/></svg><svg class="size-[11px]"><use href="#info"/></svg><svg class="size-[11px]"><use href="#help"/></svg>
      </div>
      <div class="h-4 flex items-center"><label for="bb" class="w-[88px] text-right">Backbone Curve Group</label><input id="bb" class="ml-[9px] flex-1 min-w-0 h-[13px] bg-[#151515]"><i class="w-3 h-[13px] bg-[#333] flex items-center justify-center"><svg class="size-[5px] text-[#999]"><use href="#dn"/></svg></i><svg class="w-2 h-[10px] ml-[6px] mr-[9px]"><use href="#cur"/></svg></div>
      <div class="h-4 flex items-center"><label for="cs" class="w-[88px] text-right">Cross Section Group</label><input id="cs" class="ml-[9px] flex-1 min-w-0 h-[13px] bg-[#151515]"><i class="w-3 h-[13px] bg-[#333] flex items-center justify-center"><svg class="size-[5px] text-[#999]"><use href="#dn"/></svg></i><svg class="w-2 h-[10px] ml-[6px] mr-[9px]"><use href="#cur"/></svg></div>
      <div class="mx-[9px] my-[6px] border-t border-[#454545]"></div>
      <div class="h-[14px] ml-[3px] flex border-b border-[#4a4a4a]">
        <button class="w-[33px] bg-[#484848] font-bold text-white">Surface</button><button class="w-[51px] border-r border-[#2a2a2a] bg-[#363636]">Construction</button><button class="w-[66px] border-r border-[#2a2a2a] bg-[#363636]">UVs and Attributes</button>
      </div>
      <div id="surface" class="pt-[3px] pl-[88px] pr-[8px] pb-px">
        <div class="h-4 flex items-center"><label for="shape" class="w-[88px] -ml-[88px] text-right">Surface Shape</label><div class="ml-[9px] w-[113px] h-[14px] flex items-center bg-linear-to-b from-[#4c4c4c] to-[#3c3c3c] border border-[#2a2a2a]"><select id="shape" class="flex-1 appearance-none pl-2 font-bold text-white leading-[10px]"><option>Ribbon</option></select><svg class="w-[10px] h-2 border-l border-[#2a2a2a]"><use href="#updn"/></svg></div></div>
        <div class="h-4 flex items-center"><label for="stype" class="w-[88px] -ml-[88px] text-right">Surface Type</label><div class="ml-[9px] w-[91px] h-[14px] flex items-center bg-linear-to-b from-[#4c4c4c] to-[#3c3c3c] border border-[#2a2a2a]"><select id="stype" class="flex-1 appearance-none pl-2 leading-[10px]"><option>Quadrilaterals</option></select><svg class="w-[10px] h-2 border-l border-[#2a2a2a]"><use href="#updn"/></svg></div></div>
        <div class="h-[15px] flex items-center"><label for="cols" class="w-[88px] -ml-[88px] text-right">Columns</label><input id="cols" value="1" class="ml-[9px] w-[46px] h-[13px] pl-[2px] bg-[#151515] font-bold text-white"><input type="range" aria-label="Columns slider" value="0" style="background:linear-gradient(90deg,#1d5288 0%,#0a0a0a 0%)" class="ml-px flex-1 min-w-0 appearance-none h-[2px] [&::-webkit-slider-thumb]:appearance-none [&::-webkit-slider-thumb]:w-[3px] [&::-webkit-slider-thumb]:h-3 [&::-webkit-slider-thumb]:bg-[#aaa]"></div>
        <div class="h-[15px] flex items-center"><label for="wid" class="w-[88px] -ml-[88px] text-right">Width</label><input id="wid" value="0.02" class="ml-[9px] w-[46px] h-[13px] pl-[2px] bg-[#151515] font-bold text-white"><input type="range" aria-label="Width slider" value="2" style="background:linear-gradient(90deg,#3a3a3a 2%,#0a0a0a 2%)" class="ml-px flex-1 min-w-0 appearance-none h-[2px] [&::-webkit-slider-thumb]:appearance-none [&::-webkit-slider-thumb]:w-[3px] [&::-webkit-slider-thumb]:h-3 [&::-webkit-slider-thumb]:bg-[#aaa]"></div>
        <label class="h-3 ml-[9px] flex items-center gap-1 font-bold text-white"><input type="checkbox" checked class="appearance-none size-2 bg-[#151515] flex items-center justify-center checked:before:content-['✔'] before:text-white before:text-[8px] before:leading-[8px]">Reverse Cross Sections</label>
        <label class="h-3 ml-[9px] mb-px flex items-center gap-1"><input type="checkbox" checked class="appearance-none size-2 bg-[#151515] flex items-center justify-center checked:before:content-['✔'] before:text-white before:text-[8px] before:leading-[8px]">Stretch Around Turns</label>
        <div class="h-[15px] flex items-center"><label for="maxs" class="w-[88px] -ml-[88px] text-right">Max Stretch</label><input id="maxs" value="10" class="ml-[9px] w-[46px] h-[13px] pl-[2px] bg-[#151515]"><input type="range" aria-label="Max Stretch slider" value="50" style="background:linear-gradient(90deg,#1d5288 50%,#0a0a0a 50%)" class="ml-px flex-1 min-w-0 appearance-none h-[2px] [&::-webkit-slider-thumb]:appearance-none [&::-webkit-slider-thumb]:w-[3px] [&::-webkit-slider-thumb]:h-3 [&::-webkit-slider-thumb]:bg-[#aaa]"></div>
      </div>
      <div class="ml-[6px] bg-[#363636] pb-px">
        <h2 class="h-4 pl-3 leading-4 bg-[#4b4b4b]">End Caps</h2>
        <div class="h-[36px] pt-[2px] pl-[82px] pr-[7px]">
          <div class="h-4 flex items-center"><label for="ect" class="w-[82px] -ml-[82px] text-right">End Cap Type</label><div class="ml-[9px] w-[87px] h-[14px] flex items-center bg-linear-to-b from-[#4c4c4c] to-[#3c3c3c] border border-[#2a2a2a]"><select id="ect" class="flex-1 appearance-none pl-2 leading-[10px]"><option>None</option></select><svg class="w-[10px] h-2 border-l border-[#2a2a2a]"><use href="#updn"/></svg></div></div>
          <div class="h-4 flex items-center text-[#7a7a7a]"><div class="w-[82px] -ml-[82px] flex items-center justify-between pl-[7px]"><input type="checkbox" aria-label="Enable End Caps Group" class="appearance-none size-2 bg-[#1a1a1a]"><label for="ecg">End Caps Group</label></div><input id="ecg" disabled value="endcaps" class="ml-[9px] flex-1 min-w-0 h-[13px] pl-[2px] bg-[#313131] border border-[#2a2a2a] text-[#4c4c4c]"></div>
        </div>
        <h2 class="h-4 pl-3 leading-4 bg-[#4b4b4b]">Scale</h2>
        <div class="h-[145px] pt-[2px] pl-[7px] pr-3">
          <label class="h-[13px] ml-[84px] flex items-center gap-1"><input type="checkbox" class="appearance-none size-2 bg-[#151515]">Apply Scale Along Curve</label>
          <div class="h-4 mb-[2px] flex items-center gap-1 text-[#8a8a8a] -mr-1">Scale Ramp
            <svg class="size-[11px] ml-auto" viewBox="0 0 11 11"><path d="m2 9 7-7" stroke="#777"/></svg>
            <svg class="size-[11px]" viewBox="0 0 11 11"><path d="M1 6h9M5.500 1v9M3 4v4M8 4v4" stroke="#777"/></svg>
            <svg class="size-[11px]" viewBox="0 0 11 11"><path d="M1 6h9M5 1q3 2 0 4t0 5" stroke="#777" fill="none"/></svg>
            <svg class="size-[11px] text-[#777]"><use href="#gear"/></svg>
            <i class="w-[11px] h-[9px] bg-linear-to-r from-[#222] to-white"></i>
          </div>
          <div class="flex gap-[5px]">
            <div class="w-[27px] pt-px"><div class="h-[13px] flex justify-around items-center border border-[#2a2a2a] opacity-50"><svg class="size-[6px]"><use href="#x"/></svg><svg class="size-[7px]"><use href="#plus"/></svg></div></div>
            <div class="relative flex-1 h-8 bg-[#757575] border-t-2 border-x-2 border-[#a8a8a8]"><i class="absolute -top-[3px] -left-[3px] size-1 rounded-full bg-[#ddd]"></i><i class="absolute -top-[3px] -right-[3px] size-1 rounded-full bg-[#ddd]"></i></div>
          </div>
          <div class="h-[13px] -mt-[3px] flex items-center gap-[6px] pl-[3px] text-[#282828]"><svg class="size-[7px] text-white"><use href="#dn"/></svg><svg class="w-2 h-[7px]" viewBox="0 0 8 7"><path d="M0 0h8v7H0z" fill="#eee"/><path d="M3 1.500H1.500v4H3M5 1.500h1.500v4H5" stroke="#222" fill="none"/></svg><svg class="size-2 mt-1" viewBox="0 0 8 8"><path d="M4 0 8 4v4H0V4z" fill="currentColor"/></svg><svg class="size-2 ml-auto mt-1" viewBox="0 0 8 8"><path d="M4 0 8 4v4H0V4z" fill="currentColor"/></svg></div>
          <div class="h-[15px] mt-[3px] flex items-center"><label for="pt" class="w-[88px] text-right">Point No.</label><input id="pt" value="2" class="ml-[6px] w-[34px] h-3 pl-[2px] bg-[#151515] text-[#ddd]"><input type="range" aria-label="Point slider" value="100" style="background:#1d5288" class="flex-1 ml-[2px] min-w-0 appearance-none h-[3px] [&::-webkit-slider-thumb]:appearance-none [&::-webkit-slider-thumb]:w-[3px] [&::-webkit-slider-thumb]:h-3 [&::-webkit-slider-thumb]:bg-[#bbb]"></div>
          <div class="h-[15px] flex items-center text-[#777]"><label for="pos" class="w-[86px] text-right">Position</label><input id="pos" disabled value="1" class="ml-[8px] w-[45px] h-3 pl-[2px] border border-[#303030] bg-[#343434] text-[#666]"><i class="flex-1 ml-1 h-px bg-[#2c2c2c]"></i></div>
          <div class="h-[15px] flex items-center text-[#777]"><label for="val" class="w-[86px] text-right">Value</label><input id="val" disabled value="1" class="ml-[8px] w-[45px] h-3 pl-[2px] border border-[#303030] bg-[#343434] text-[#666]"><i class="flex-1 ml-1 h-px bg-[#2c2c2c]"></i></div>
          <div class="h-4 flex items-center text-[#777]"><label for="interp" class="w-[86px] text-right">Interpolation</label><div class="ml-[8px] w-[76px] h-[13px] flex items-center border border-[#303030]"><select id="interp" disabled class="flex-1 appearance-none pl-2 leading-[10px]"><option>Linear</option></select><svg class="w-[10px] h-2 opacity-50"><use href="#updn"/></svg></div></div>
        </div>
        <h2 class="h-[15px] pl-3 leading-[15px] bg-[#4b4b4b]">Rotation</h2>
        <div class="pt-[3px] pl-[82px] pr-[7px]">
          <div class="h-4 flex items-center"><label for="ro" class="w-[82px] -ml-[82px] text-right">Rotate Order</label><div class="ml-[9px] w-[74px] h-[14px] flex items-center bg-linear-to-b from-[#4c4c4c] to-[#3c3c3c] border border-[#2a2a2a]"><select id="ro" class="flex-1 min-w-0 appearance-none pl-2 leading-[10px]"><option>Pitch, Yaw, Roll</option></select><svg class="w-[10px] h-2 border-l border-[#2a2a2a]"><use href="#updn"/></svg></div></div>
          <label class="h-3 ml-[9px] flex items-center gap-1"><input type="checkbox" checked class="appearance-none size-2 bg-[#151515] flex items-center justify-center checked:before:content-['✔'] before:text-white before:text-[8px] before:leading-[8px]">Apply Roll or Twist</label>
          <div class="h-[15px] flex items-center"><label for="roll" class="w-[82px] -ml-[82px] text-right">Roll</label><input id="roll" value="0" class="ml-[9px] w-[46px] h-[13px] pl-[2px] bg-[#151515] text-[#ddd]"><input type="range" aria-label="Roll slider" value="50" style="background:linear-gradient(90deg,#1d5288 50%,#0a0a0a 50%)" class="ml-px flex-1 min-w-0 appearance-none h-[2px] [&::-webkit-slider-thumb]:appearance-none [&::-webkit-slider-thumb]:w-[3px] [&::-webkit-slider-thumb]:h-3 [&::-webkit-slider-thumb]:bg-[#aaa]"></div>
          <div class="h-[15px] flex items-center"><label for="ft" class="w-[82px] -ml-[82px] text-right">Full Twists</label><input id="ft" value="0" class="ml-[9px] w-[46px] h-[13px] pl-[2px] bg-[#151515] text-[#ddd]"><input type="range" aria-label="Full Twists slider" value="50" style="background:linear-gradient(90deg,#1d5288 50%,#0a0a0a 50%)" class="ml-px flex-1 min-w-0 appearance-none h-[2px] [&::-webkit-slider-thumb]:appearance-none [&::-webkit-slider-thumb]:w-[3px] [&::-webkit-slider-thumb]:h-3 [&::-webkit-slider-thumb]:bg-[#aaa]"></div>
          <div class="h-4 flex items-center"><label for="ptw" class="w-[82px] -ml-[82px] text-right">Partial Twist</label><input id="ptw" value="0" class="ml-[9px] w-[46px] h-[13px] pl-[2px] bg-[#151515] text-[#ddd]"><input type="range" aria-label="Partial Twist slider" value="50" style="background:linear-gradient(90deg,#1d5288 50%,#0a0a0a 50%)" class="ml-px flex-1 min-w-0 appearance-none h-[2px] [&::-webkit-slider-thumb]:appearance-none [&::-webkit-slider-thumb]:w-[3px] [&::-webkit-slider-thumb]:h-3 [&::-webkit-slider-thumb]:bg-[#aaa]"><label for="tp" class="ml-px">Twist Per</label><div class="ml-2 w-[106px] h-[14px] flex items-center bg-linear-to-b from-[#4c4c4c] to-[#3c3c3c] border border-[#2a2a2a]"><select id="tp" class="flex-1 min-w-0 appearance-none pl-2 leading-[10px]"><option>Per Full Curve by Distance</option></select><svg class="w-[10px] h-2 border-l border-[#2a2a2a]"><use href="#updn"/></svg></div></div>
          <div class="-ml-[76px] my-[6px] border-t border-[#484848]"></div>
          <label class="h-[13px] ml-[9px] flex items-center gap-1"><input type="checkbox" class="appearance-none size-2 bg-[#151515]">Apply Yaw</label>
          <label class="h-3 ml-[9px] flex items-center gap-1"><input type="checkbox" class="appearance-none size-2 bg-[#151515]">Apply Pitch</label>
        </div>
      </div>
    </section>
  </main>

  <!-- playbar -->
  <div class="h-8 flex bg-[#303030] border-t border-[#4a4a4a] overflow-hidden">
    <div class="w-[146px] pl-2 pt-[5px]">
      <div class="flex h-[18px] bg-[#404040] mr-1">
        <button aria-label="First frame" class="w-[18px] border border-[#222]"><svg viewBox="0 0 16 16"><path d="M2 4v8M8 4v8L3.500 8zM14 4v8L9 8z" fill="#eee" stroke="#eee"/></svg></button>
        <button aria-label="Play backwards" class="w-[17px] border border-[#222]"><svg viewBox="0 0 16 16"><path d="M11 3v10L5 8z" fill="#eee"/></svg></button>
        <button aria-label="Stop" class="w-[17px] bg-[#6688ac] border border-[#9ab]"><svg viewBox="0 0 16 16"><path d="M4 4h8v8H4z" fill="#f0f0e0"/></svg></button>
        <button aria-label="Play" class="w-[17px] border border-[#222]"><svg viewBox="0 0 16 16"><path d="M5 3v10l6-5z" fill="#eee"/></svg></button>
        <button aria-label="Last frame" class="w-[18px] border border-[#222]"><svg viewBox="0 0 16 16"><path d="M14 4v8M8 4v8l4.500-4zM2 4v8l5-4z" fill="#eee" stroke="#eee"/></svg></button>
        <input type="text" aria-label="Frame" value="90" class="w-[30px] pl-[2px] bg-[#151515] text-[8px] text-[#eee]">
        <button aria-label="Previous frame" class="w-2 border border-[#222]"><svg viewBox="0 0 6 16"><path d="M3.500 5v6L0 8zM5 5v6" fill="#ddd" stroke="#ddd"/></svg></button>
        <button aria-label="Next frame" class="w-2 border border-[#222]"><svg viewBox="0 0 6 16"><path d="M2.500 5v6L6 8zM1 5v6" fill="#ddd" stroke="#ddd"/></svg></button>
      </div>
      <div class="flex h-4 mt-1 bg-[#484848] w-[103px] gap-[5px] pl-[3px]">
        <svg class="size-3"><use href="#list"/></svg><svg class="size-3 ml-1"><use href="#brush"/></svg><svg class="size-3 ml-1"><use href="#gear"/></svg><i class="w-[15px] bg-[#52708f] flex justify-center"><svg class="size-3"><use href="#help"/></svg></i>
      </div>
    </div>
    <div id="ruler" class="relative flex-1 flex text-[6px] leading-[8px] text-[#8a8a8a]"></div>
    <div class="w-[154px] flex pt-[6px] pl-[3px]">
      <i class="size-6 shrink-0 mt-1 rounded-full bg-[#414141] flex items-center justify-center"><svg class="size-3" viewBox="0 0 12 12"><circle cx="7" cy="3.500" r="2.300" fill="none" stroke="#888"/><path d="M6 5.500 3 11M4 9l2 1" stroke="#888"/></svg></i>
      <i class="w-[9px] h-[14px] mt-[9px] bg-[#444] flex items-center justify-center text-[#bbb]"><svg class="size-[6px]"><use href="#dn"/></svg></i>
      <div class="flex flex-col gap-1 ml-[3px]"><svg class="size-[14px] shrink-0"><use href="#nodes"/></svg><svg class="size-[14px] shrink-0"><use href="#nodes"/></svg></div>
      <div class="flex-1 flex flex-col gap-[3px] ml-1 mr-[3px]">
        <button class="h-[15px] shrink-0 flex items-center justify-between pl-[10px] pr-1 bg-[#484848] border border-[#222] text-[#ddd]">0 keys, 0/0 channels<svg class="size-[6px] text-[#aaa] rotate-180"><use href="#dn"/></svg></button>
        <button class="h-[15px] shrink-0 flex items-center justify-between pl-2 pr-1 bg-[#505050] border border-[#222] text-[#ddd]">Key All Channels<svg class="size-[6px] text-[#aaa] rotate-180"><use href="#dn"/></svg></button>
      </div>
    </div>
  </div>

  <!-- title band laid over the application -->
  <h1 class="absolute left-0 top-[56px] w-[540px] h-[76px] pl-[53px] flex items-center bg-[#ff4a12] text-white font-[350] text-[53px] leading-[72px]">メニュー画面<span class="ml-5 text-[65px]">SOP</span></h1>
</div>

<footer class="h-15 bg-black flex items-center justify-center relative">
  <svg class="absolute left-[57px] top-[10px] w-[178px] h-[42px]" viewBox="0 0 178 42"><path d="M15 32.500h156q4 0 4-4V6.500q0-4-4-4H7q-4 0-4 4v19.500l9 11" fill="none" stroke="#fff" stroke-width="4.500"/><path d="M1 25h5l9 8v7z" fill="#fff"/><text x="11" y="25" fill="#fff" font-family="Lato" font-weight="700" font-size="20">BANDAI NAMCO</text></svg>
  <p class="text-[30px] leading-[44px] text-[#6a6a6a] -ml-[55px]">Houdini による UI 作成について</p>
  <div class="absolute right-[61px] top-0 w-[90px] h-15 bg-[#ff0000] text-white text-[30px] leading-[60px] text-center">76</div>
</footer>

<script>
/* scene graph rows: name, level, icon, type, count, colour, marker */
const rows=[['mesh_0',1,'mesh','Mesh','1'],['btn3',0,'xf','Xfor','2 comp','#3a9a44'],['mesh_0',1,'mesh','Mesh','1'],['cameras',0,'group','Xfor','2'],['camera1',1,'gear','Cam','1'],['sopimport1',0,'xf','Xfor','3 comp','',1],['curve_0',1,'','Basis','1','',1],['mesh_0',1,'mesh','Mesh','1']];
document.getElementById('tree-rows').innerHTML=rows.map(([n,i,ic,t,c,col,dot])=>`<tr><td class="p-0"><div class="flex items-center gap-[3px] ${i?(dot?'pl-5':'pl-[22px]'):'pl-3'}">${i?'<i class="w-[5px] h-1 -mt-1 border-l border-b border-[#777]"></i>':'<svg class="size-[6px]"><use href="#minus"/></svg>'}${dot?'<i class="size-[3px] mx-px rounded-full bg-[#e05050]"></i>':''}${ic?`<svg class="size-2 text-[#777]"><use href="#${ic}"/></svg>`:'<svg class="size-2" viewBox="0 0 8 8"><path d="M0 6Q2-1 4 4t4 0" stroke="#a88" fill="none"/></svg>'}<span style="color:${col||''}">${n}</span></div></td><td class="p-0">${t}</td><td class="p-0">${c}</td><td class="p-0"><div class="flex items-center gap-px"><svg class="size-2"><use href="#pow"/></svg><svg class="size-2"><use href="#up"/></svg><i class="size-[2px] bg-[#888] mx-[3px]"></i><svg class="w-[7px] h-2"><use href="#cur"/></svg></div></td></tr>`).join('');

/* viewport display options */
const di=['<path d="M2 8q5-4 10 0M3 8q1.500 3 3 0M8 8q1.500 3 3 0" stroke="#ccd" fill="none"/>','<path d="M2 3l9 2v6l-7-1z" fill="#8ab890"/><path d="M4 6l5 4" stroke="#243"/>','<path d="M3 6h8v6H3z" fill="#eee"/><path d="M4.500 6V4q2.500-3.500 5 0v2" stroke="#eee" stroke-width="1.500" fill="none"/>','<circle cx="7" cy="5" r="3" fill="#222" stroke="#aaa"/><path d="M6 8h2v4H6z" fill="#aaa"/>','<circle cx="7" cy="7" r="4.500" fill="#e4e8e4"/><circle cx="9" cy="9" r="3" fill="#999"/>','<circle cx="7" cy="5.500" r="3.500" fill="#f6f4c0"/><path d="M6 9h2v3H6z" fill="#ddd"/>','<circle cx="7" cy="4" r="3" fill="#f6f4c0"/><path d="M2 10h10M6 7h2v4" stroke="#bbb" stroke-width="1.500"/>','<circle cx="7" cy="7" r="5" fill="#eee"/><path d="m7 4 3 2-1 4H5L4 6z" fill="#222"/>','<ellipse cx="5" cy="5" rx="4" ry="2" fill="#aaa" transform="rotate(30 5 5)"/><path d="m8 9 4 2" stroke="#999" stroke-width="2"/>','<path d="M2 7h6v5H2zM7 3l4 3" fill="#bbb" stroke="#bbb" stroke-width="2"/>','<circle cx="6.500" cy="7" r="1.700" fill="#fff"/>','<path d="m5 9 5-5" stroke="#bbb"/><circle cx="5" cy="9" r="1.700" fill="#fff"/>','<path d="m4 11 3-4" stroke="#aaa"/><path d="m7 7 3-4" stroke="#fff" stroke-width="2.500"/>','<circle cx="4" cy="10" r="1.500" fill="#fff"/><text x="5" y="8" font-size="6" fill="#fff">12</text>','<path d="M2 11 9 3v8z" fill="#999"/><path d="m6 8 5 2-4 2z" fill="#eee"/>','<path d="M2 11 9 3v8z" fill="#bbb"/><path d="M7 7h5v4H7z" fill="#ddd"/>','<path d="M2 12V2h11L6 5z" fill="none" stroke="#888"/>','<path d="M2 10 9 3v7z" fill="#9ac"/><circle cx="9" cy="8" r="3" fill="#ddd"/>','<path d="M2 2h10v10H2z" fill="#ddd"/><path d="M2 2h3v3H2zM8 2h3v3H8zM5 5h3v3H5zM2 8h3v3H2zM8 8h3v3H8z" fill="#c8a8a8"/>','<path d="m7 2 5 5-5 5-5-5z" fill="#7898c8"/><circle cx="7" cy="7" r="1.800" fill="#dde"/>','<path d="M4 5h6v4H4z" fill="#cde"/><path d="M3 3h2v2H3zM9 3h2v2H9zM3 9h2v2H3zM9 9h2v2H9z" fill="#7ab83c"/>','<path d="m2 8 5-1 4-4M7 7l3 4" stroke="#eee" stroke-width="1.500" fill="none"/>','<circle cx="7" cy="7" r="5.500" fill="#222" stroke="#777"/><path d="M4 4h6v6H4z" fill="#ddd"/><path d="M7 4v6M4 7h6" stroke="#333"/>','<path d="M2 3h10v8H2z" fill="#eee"/><path d="M2 10 5 7l3 1 4-3v2l-4 3H2z" fill="#333"/>'];
document.getElementById('display-bar').innerHTML=di.map((d,i)=>`<svg class="size-[15px] ${[0,5,7,17,18,23].includes(i)?'bg-[#52708f]':''}" viewBox="0 0 14 14">${d}</svg>`).join('');

/* perspective ground grid */
let g='';
for(let k=-16;k<=16;k++){const m=k%5===0;g+=`<path d="M${464.8+23.7*k} 67L${467+45.3*k} 573" stroke="${m?'#2b3a4c':'#20242a'}"/>`}
[75,90,107,123,142,161,182,204,226,251,277,306,337,368,406,444,487,533].forEach((y,i)=>{const m=i%5===0;g+=`<path d="M223 ${y+.5}L707 ${y-1}" stroke="${m?'#2b3a4c':'#20242a'}"/>`});
g+=`<path d="M368.500 277C367 400 565 398 563.500 276M371.500 277C371 394 561 393 559.500 276" fill="none" stroke="#b9b79c"/><path d="M370 277C369 397 563 395.500 561.500 276" fill="none" stroke="#b9b79c" stroke-width="4" stroke-dasharray="1 5"/><path d="M368 277h4M559 276.500h4" stroke="#b9b79c"/>
<g font-family="Liberation Sans" font-size="14"><g fill="#a0706a"><text x="286" y="276" font-style="italic">-1</text><text x="455" y="275">0</text><text x="617" y="274" transform="rotate(-8 620 270)">1</text></g><g fill="#6668a8"><text transform="translate(470 279) rotate(90)" font-size="13">0</text><text transform="translate(472 448) rotate(90)" font-size="15">1</text><text transform="translate(468 162) rotate(90)" font-size="10">-1</text></g></g>
<path d="M233 566l8-3" stroke="#c04040"/><path d="M233 566v-6" stroke="#40c060"/><g font-size="8"><text x="231" y="561" fill="#40c060">y</text><text x="238" y="565" fill="#c04040">x</text><text x="231" y="571" fill="#4060d0">z</text></g>`;
document.getElementById('viewport').innerHTML=`<g transform="translate(-223 -68)">${g}</g>`;

/* network */
const dot=(x,y)=>`<circle cx="${x}" cy="${y}" r="2.900" fill="#c9c9c9"/>`;
const clock=(x,y)=>`<circle cx="${x}" cy="${y}" r="3.500" fill="#1c2418" stroke="#9bd080" stroke-width="1.400"/><path d="M${x} ${y}l1.500-2" stroke="#9bd080"/>`;
const warn=(x,y)=>`<circle cx="${x}" cy="${y}" r="4.700" fill="#d9a129"/><path d="M${x} ${y-3}v3.500M${x} ${y+1.500}v1.500" stroke="#222" stroke-width="1.600"/>`;
const lock=(x,y)=>`<path d="M${x-3.500} ${y-1}h7v5h-7z" fill="#5d6862"/><path d="M${x-2} ${y-1}v-1.500q2-3 4 0v1.500" fill="none" stroke="#5d6862" stroke-width="1.200"/>`;
const xf=(a,b)=>`<path d="m-6-3 4-2 2 3-4 2zM3-3l4 1-1 3-3-1zM-7 1h5l-1 4h-4zM2 1h5v4H3z" fill="${a}"/><path d="M-3 1q0-6 4-6t4 6l-3 2q0-4-1-4t-1 4z" fill="${b}"/><path d="M-2 3h5" stroke="${a}" stroke-width="1.500"/>`;
const icons={
 circle:'<circle r="6.500" fill="#d4d6da" stroke="#636a76" stroke-width="1.400"/>',
 resample:'<path d="M-7-2q3.500-6 7-2.500t7-.5M-7 4q3.500-6 7-2.500t7-.5" fill="none" stroke="#8c6a6a" stroke-width="1.200"/>',
 group:'<circle cx="1" cy="-4" r="3.600" fill="#d9a765"/><path d="M-5-3 3 5M-4 5 5-3M0-3v9M-5 1h10" stroke="#9c8870" stroke-width="1.300"/><g fill="#b58e58"><circle cx="-5" cy="5" r="2"/><circle cx="5" cy="4.500" r="2"/><circle cx="-5" cy="-2" r="1.500"/></g><circle cx="1" cy="2" r="2" fill="#e9c48a"/>',
 carve:'<path d="M-5-5q5-3 10 0V5.500q-5 3-10 0z" fill="#a9afb8" stroke="#777d86" stroke-width=".8"/><path d="M-4-4.500q4-2 8 0-4 2-8 0z" fill="#e6e9ee"/><path d="M-1-3v9.500" stroke="#5e646e"/><path d="M1-2h3v8H1z" fill="#d5d9df"/>',
 xform:xf('#345a8c','#9aa9b8'), xformY:xf('#1f5a3c','#8d8f98'),
 smooth:'<path d="m-7-3 9-3 5 8-9 4z" fill="#9a9096"/><path d="m-7-3 4-2 2 3 3-4 5 8" fill="none" stroke="#d04848" stroke-width="1.300"/>',
 del:'<path d="M-3-7H6V1h-9z" fill="#fff" stroke="#222" stroke-width=".8"/><path d="m-1-6 6 6m0-6-6 6" stroke="#d01818" stroke-width="2.400"/><circle cx="-5" cy="5" r="2" fill="none" stroke="#555"/><path d="m-3 3 3-3" stroke="#555"/>',
 sweep:'<path d="M-2-5q5-2 9-1v7q-4 0-5 5l-3 1z" fill="#a4a7b2"/><path d="M-6-3l4-2 3 1v10l-7-2z" fill="#8c8f9c"/><path d="M-6-3l4-2q4-2 9-1l-3 2q-3 0-5 1z" fill="#c8cad4"/>',
 merge:'<path d="m-6-7h4l3 4-3 2M7-1 3 1-3 2M-6 6l5 1 3-3" fill="none" stroke="#888" stroke-width="1.200"/><path d="m-1-7 4 1-3 3zM3 3l3-2v4l-3 1zM-5 3l3-1v3z" fill="#b02435"/><path d="m4-3 3-1-1 4zM-7 5h4v2h-4zM-6-8h4v2h-4z" fill="#f4f4f4"/>',
 none:''};
/* x, y, shape, icon, label, label x, inputs */
const N=[[1334,130,'r','circle','circle1',1369,0],[1334,263,'r','resample','resample1',1369,1],[1334,328,'r','group','grouprange1',1369,1],[1334,393,'d','xformY','anim_scale',1372,1],
[1146,249,'d','xformY','external_scale',1184,1],[1146,315,'r','carve','carve2',1181,1],[1146,380,'d','carve','cut_anim',1184,1],[1146,446,'r','group','grouprange2',1181,1],
[1243,507,'r','xform','transform3',1278,1],[1243,572,'r','none','CurveCutter1',1278,2],[1243,638,'r','carve','carve1',1278,1],[1243,696,'p','del','attribdelete1',1280,2],
[1334,605,'r','carve','carve5',1369,1],[1419,507,'r','xform','transform2',1454,1],[1419,572,'r','xform','transform1',1454,1],[1419,638,'r','smooth','smooth1',1454,1],[1401,712,'r','carve','carve6',1437,1],
[1257,766,'s','sweep','sweep1',1293,2],[1340,825,'m','merge','merge1',1375,0],[1155,890,'m','merge','merge3',1190,0]];
let s=`<g fill="none" stroke="#4d6a94"><path d="M1334 144V249M1334 277V314M1334 342V379M1334 411V590M1334 619L1329 808"/><path d="M1334 411Q1334 418 1326 424L1252 472Q1243 478 1243 493M1334 411Q1334 418 1344 426L1410 473Q1419 480 1419 493"/><path d="M1334 411C1334 425 1310 434 1302 419L1182 226C1172 210 1146 210 1146 233"/><path d="M1146 267V301M1146 329V363M1146 398V432M1146 460Q1144 472 1130 478M1148 460L1159 872"/><path d="M1243 521L1232 559M1243 586V624M1243 651L1232 682M1243 709L1245 752" /><path d="M1419 521V559M1419 586V624M1419 651L1401 699M1401 726L1398 737M1348 795Q1342 801 1342 808M1340 841L1266 989"/><path d="M1130 837L1156 855Q1168 862 1169 872M1130 857Q1148 858 1150 872M1130 862Q1140 864 1142 872M1155 906Q1154 915 1146 915H1130"/></g><path d="M1257 780Q1258 788 1270 789L1340 798Q1352 800 1352 808" fill="none" stroke="#777f68"/><path d="M1239 317l7 6-8 4z" fill="#5a94dc"/>
<circle cx="1257" cy="767" r="28" fill="#41659a"/><circle cx="1257" cy="767" r="19.500" fill="#8f62c0"/>`;
const slash=(x,y,h)=>[-20,-13,13,21].map(o=>`<path d="M${x+o+1.500} ${y-h}L${x+o-1.500} ${y+h}" stroke="#8e8e8e"/>`).join('');
for(const [x,y,t,ic,l,lx,n] of N){
 if(t==='r')s+=`<rect x="${x-29}" y="${y-9}" width="58" height="18" rx="2.500" fill="#c9c9c9"/>`+slash(x,y,8);
 if(t==='d')s+=`<path d="M${x-4} ${y-12}q4-1 8 0l24 6q4 1 4 6t-4 6l-24 6q-4 1-8 0l-24-6q-4-1-4-6t4-6z" fill="#fff100"/>`+[-20,-13,13,21].map(o=>`<path d="M${x+o} ${y-8}V${y+8}" stroke="#b8ae10"/>`).join('');
 if(t==='p')s+=`<path d="M${x-24} ${y-9}h53q3 0 2 2l-5 14q-1 2-3 2h-53q-2 0-1-2l4-14q1-2 3-2z" fill="#c9c9c9"/>`+slash(x,y,8);
 if(t==='s')s+=`<rect x="${x-29}" y="${y-9}" width="58" height="18" rx="2.500" fill="#c9c9c9"/>`+slash(x,y,8)+`<path d="M${x+22} ${y-9}h7v18h-9z" fill="#12a8e8"/><rect x="${x-29}" y="${y-9}" width="58" height="18" rx="2.500" fill="none" stroke="#c9a02c" stroke-width="1.600"/>`;
 if(t==='m')s+=`<path d="M${x-23} ${y-9}q23-3 46 0 6 1 6 9t-6 9q-23 3-46 0-6-1-6-9t6-9z" fill="#c9c9c9"/><path d="M${x-21} ${y-16}q21-4 42 0 4 1 3 3t-4 2q-20-3-40 0-3 0-4-2t3-3z" fill="#bdbdbd" stroke="#303030" stroke-width=".8"/>`+slash(x,y,9);
 s+=`<g transform="translate(${x} ${y})">${icons[ic]}</g>`;
 const o=t==='d'?17:t==='m'?16:14;
 s+=dot(x,y+o); if(n===1)s+=dot(x,y-o); if(n===2)s+=dot(x-11.500,y-o)+dot(x+11.500,y-o);
 s+=`<text x="${lx}" y="${y+4}" font-size="11" fill="#d6d6d6">${l}</text>`;
}
[[1378,407],[1190,263],[1188,328],[1190,393],[1188,459],[1285,520],[1297,585],[1285,651],[1287,709],[1376,617],[1461,520],[1461,585],[1461,651],[1443,725],[1299,779],[1382,838],[1208,903]].forEach(p=>s+=clock(...p));
s+=warn(1285,585)+warn(1196,903)+lock(1310,585)+lock(1299,709);
s+=`<g font-size="10" fill="#666"><text x="1184" y="240">Transform</text><text x="1184" y="371">Carve</text><text x="1372" y="384">Transform</text></g><g font-size="10" fill="#6c9bdc"><text x="1369" y="352">move</text><text x="1181" y="477">end</text><text x="1454" y="668">P</text><text x="1127" y="672">nd</text></g><g font-size="11" fill="#d6d6d6"><text x="1127" y="557">e2</text><text x="1129" y="804">4</text></g>
<rect x="1345" y="737" width="118" height="59" fill="#393939"/><ellipse cx="1273" cy="771" rx="80" ry="33.500" fill="none" stroke="#ff4a12" stroke-width="6"/><text x="1364" y="778" font-family="Noto Sans" font-weight="700" font-size="25" fill="#ff4a12">sweep</text>`;
document.getElementById('network').innerHTML=`<g transform="translate(-1131 -64)" text-anchor="start">${s}</g>`;

/* frame ruler 1-90 */
let r='';
for(let i=1;i<=90;i++){const m=i%12===0;r+=`<div class="flex-1 min-w-0 flex flex-col"><span class="${i===90?'invisible':''} h-[11px] pt-px self-start -translate-x-1/2 ${m?'text-[#ccc]':''}">${i}</span><i class="border-l ${m?'h-2 border-[#999]':'h-[5px] border-[#777]'}"></i></div>`}
r+='<i class="absolute left-0 right-0 top-[14px] h-px bg-[#8a8a8a]"></i><b class="absolute right-[11px] top-px h-3 w-4 text-center font-normal text-[8px] leading-[10px] bg-black border border-[#ccc] text-white">90</b>';
document.getElementById('ruler').innerHTML=r;
</script>
</body>
</html>
